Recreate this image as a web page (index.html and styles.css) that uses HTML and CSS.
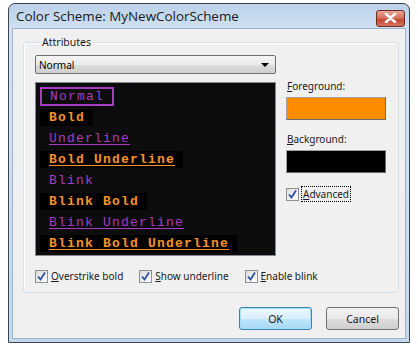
FILE: index.html
```html
<!DOCTYPE html>
<html lang="en">

<head>
    <meta charset="UTF-8" />
    <meta name="viewport" content="width=device-width, initial-scale=1.0" />
    <title>Color Scheme</title>
    <link rel="stylesheet" href="styles.css">
</head>

<body>
    <div class="window">
        <div class="titlebar">
            <span class="title">Color Scheme: MyNewColorScheme</span>
            <button class="close" type="button">
                <svg width="13" height="10" viewBox="0 0 13 10">
                    <path d="M2 1 L11 9 M11 1 L2 9" stroke="#fff" stroke-width="2.6" stroke-linecap="round" />
                </svg>
            </button>
        </div>
        <div class="client">
            <fieldset class="group">
                <legend>Attributes</legend>
                <div class="main">
                    <div class="left">
                        <div class="select">
                            <span>Normal</span>
                            <span class="arrow"></span>
                        </div>
                        <div class="list">
                            <div class="item normal selected"><span>Normal</span></div>
                            <div class="item bold"><span>Bold</span></div>
                            <div class="item normal ul"><span>Underline</span></div>
                            <div class="item bold ul"><span>Bold Underline</span></div>
                            <div class="item normal"><span>Blink</span></div>
                            <div class="item bold"><span>Blink Bold</span></div>
                            <div class="item normal ul"><span>Blink Underline</span></div>
                            <div class="item bold ul"><span>Blink Bold Underline</span></div>
                        </div>
                    </div>
                    <div class="right">
                        <div class="label"><u>F</u>oreground:</div>
                        <div class="swatch fg"></div>
                        <div class="label"><u>B</u>ackground:</div>
                        <div class="swatch bg"></div>
                        <label class="check">
                            <span class="box"><svg width="11" height="11" viewBox="0 0 11 11"><path d="M2 5.5 L4.5 8.5 L9 1.5" fill="none" stroke="#2a4fa8" stroke-width="1.8" /></svg></span>
                            <span class="focus"><u>A</u>dvanced</span>
                        </label>
                    </div>
                </div>
                <div class="options">
                    <label class="check">
                        <span class="box"><svg width="11" height="11" viewBox="0 0 11 11"><path d="M2 5.5 L4.5 8.5 L9 1.5" fill="none" stroke="#2a4fa8" stroke-width="1.8" /></svg></span>
                        <span><u>O</u>verstrike bold</span>
                    </label>
                    <label class="check">
                        <span class="box"><svg width="11" height="11" viewBox="0 0 11 11"><path d="M2 5.5 L4.5 8.5 L9 1.5" fill="none" stroke="#2a4fa8" stroke-width="1.8" /></svg></span>
                        <span><u>S</u>how underline</span>
                    </label>
                    <label class="check">
                        <span class="box"><svg width="11" height="11" viewBox="0 0 11 11"><path d="M2 5.5 L4.5 8.5 L9 1.5" fill="none" stroke="#2a4fa8" stroke-width="1.8" /></svg></span>
                        <span><u>E</u>nable blink</span>
                    </label>
                </div>
            </fieldset>
            <div class="buttons">
                <button class="btn default" type="button">OK</button>
                <button class="btn" type="button">Cancel</button>
            </div>
        </div>
    </div>
</body>

</html>
```

FILE: styles.css
```css
body {
    margin: 0;
    background-color: #fff;
    font-family: "Noto Sans", sans-serif;
    font-size: 10px;
    color: #000;
}

.window {
    width: 402px;
    height: 340px;
    margin: 3px 0 0 8px;
    border: 1px solid #3c4450;
    border-radius: 7px 7px 0 0;
    background: linear-gradient(#bcd2ea, #d3e3f3 30px, #c4d9ee);
    padding: 0 3px 3px 3px;
    box-sizing: border-box;
    display: flex;
    flex-direction: column;
}

.titlebar {
    height: 24px;
    display: flex;
    align-items: center;
    justify-content: space-between;
    padding: 0 1px 0 4px;
}

.title {
    font-family: "Open Sans", sans-serif;
    font-size: 13.4px;
    color: #1a1a1a;
}

.close {
    width: 29px;
    height: 17px;
    margin-top: 4px;
    padding: 0;
    border: 1px solid #6b2a22;
    border-radius: 3px;
    background: linear-gradient(#e9a698, #d66a58 50%, #c0412e 51%, #d8745c);
    display: flex;
    align-items: center;
    justify-content: center;
}

.client {
    flex: 1;
    background-color: #f0f0f0;
    border: 1px solid #9db3cb;
    padding: 6px 6px 0 10px;
}

.group {
    margin: 0;
    border: 1px solid #d5dfe5;
    border-radius: 3px;
    padding: 6px 0 9px 11px;
    box-shadow: inset 1px 1px 0 #fff;
}

.group legend {
    padding: 0 2px;
    margin-left: 5px;
    font-size: 10.5px;
    color: #1a1a1a;
}

.main {
    display: flex;
}

.left {
    width: 241px;
}

.select {
    height: 19px;
    border: 1px solid #707070;
    border-radius: 2px;
    background: linear-gradient(#f4f4f4, #ebebeb 50%, #dddddd 51%, #cfcfcf);
    box-sizing: border-box;
    display: flex;
    align-items: center;
    justify-content: space-between;
    padding: 0 6px 0 3px;
}

.arrow {
    width: 0;
    height: 0;
    border-left: 4px solid transparent;
    border-right: 4px solid transparent;
    border-top: 4px solid #000;
}

.list {
    margin-top: 8px;
    height: 174px;
    box-sizing: border-box;
    background-color: #0c0c0c;
    border: 1px solid #828790;
    padding: 3px 0 0 4px;
    font-family: "Liberation Mono", monospace;
    font-size: 13px;
    letter-spacing: 1.2px;
}

.item {
    height: 21px;
    display: flex;
    align-items: center;
}

.item span {
    padding: 1px 8px 1px 9px;
    line-height: 15px;
}

.item.normal {
    color: #a83cc0;
}

.item.bold {
    color: #f6922a;
    font-weight: bold;
}

.item.bold span {
    background-color: #000;
}

.item.ul span {
    text-decoration: underline;
    text-underline-offset: 2px;
}

.item.selected span {
    border: 2px solid #a83cc0;
    padding: 0 8px;
}

.right {
    margin-left: 10px;
    padding-top: 24px;
    display: flex;
    flex-direction: column;
    align-items: flex-start;
}

.label {
    margin-left: 1px;
    color: #1a1a1a;
}

.swatch {
    width: 100px;
    height: 23px;
    box-sizing: border-box;
    margin: 4px 0 12px 0;
    border: 1px solid #a0a0a0;
    border-right-color: #696969;
    border-bottom-color: #696969;
}

.swatch.fg {
    background-color: #ff8c00;
}

.swatch.bg {
    background-color: #000;
    margin-bottom: 14px;
}

.check {
    display: flex;
    align-items: center;
    gap: 3px;
    color: #1a1a1a;
}

.box {
    width: 13px;
    height: 13px;
    box-sizing: border-box;
    border: 1px solid #8e8f8f;
    background: linear-gradient(135deg, #dcdcdc, #fff);
    display: flex;
    align-items: center;
    justify-content: center;
}

.focus {
    outline: 1px dotted #000;
    padding: 0 1px;
}

.options {
    display: flex;
    gap: 16px;
    margin-top: 13px;
}

.buttons {
    display: flex;
    justify-content: flex-end;
    gap: 14px;
    margin-top: 14px;
}

.btn {
    width: 73px;
    height: 23px;
    font-family: "Noto Sans", sans-serif;
    font-size: 10.5px;
    color: #1a1a1a;
    border: 1px solid #707070;
    border-radius: 3px;
    background: linear-gradient(#f2f2f2, #ebebeb 50%, #dddddd 51%, #cfcfcf);
}

.btn.default {
    border-color: #3c7fb1;
    background: linear-gradient(#eaf6fd, #d9f0fc 50%, #bee6fd 51%, #a7d9f5);
    box-shadow: inset 0 0 0 1px #9fe0fb;
}
```
